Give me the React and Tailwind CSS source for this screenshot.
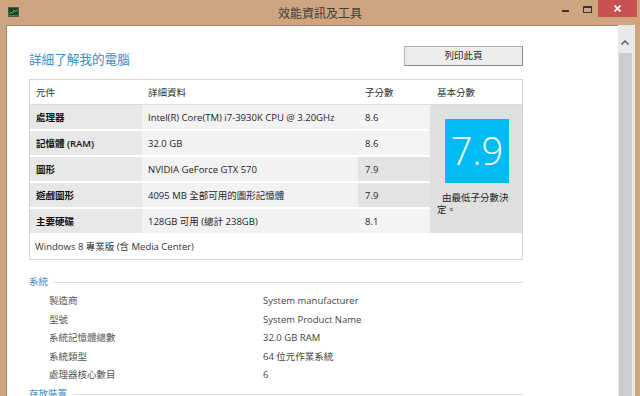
const rows = [
  { part: '處理器', detail: 'Intel(R) Core(TM) i7-3930K CPU @ 3.20GHz', score: '8.6', low: false },
  { part: '記憶體 (RAM)', detail: '32.0 GB', score: '8.6', low: false },
  { part: '圖形', detail: 'NVIDIA GeForce GTX 570', score: '7.9', low: true },
  { part: '遊戲圖形', detail: '4095 MB 全部可用的圖形記憶體', score: '7.9', low: true },
  { part: '主要硬碟', detail: '128GB 可用 (總計 238GB)', score: '8.1', low: false },
]

const system = [
  ['製造商', 'System manufacturer'],
  ['型號', 'System Product Name'],
  ['系統記憶體總數', '32.0 GB RAM'],
  ['系統類型', '64 位元作業系統'],
  ['處理器核心數目', '6'],
]

function TitleBar() {
  return (
    <div className="grid grid-cols-[1fr_auto_1fr] h-[25px] items-start">
      <div className="pl-[8px] pt-[7px]">
        <svg width="11" height="10" viewBox="0 0 11 10">
          <rect x="0.5" y="0.5" width="10" height="9" fill="#1f3d22" stroke="#4d5a4f" />
          <polyline points="1.5,7 3,5 4.5,6.5 6,3 7.5,5 9.5,2.5" fill="none" stroke="#3fc24a" strokeWidth="1" />
          <rect x="1" y="8" width="9" height="1" fill="#2f8f37" />
        </svg>
      </div>
      <div className="pt-[6px] text-[12px] leading-[15px] text-[#3c3c3c]">效能資訊及工具</div>
      <div className="flex justify-end pr-[3px]">
        <div className="w-[22px] h-[17px] flex justify-center pt-[10px]">
          <div className="w-[7px] h-[2px] bg-[#333]"></div>
        </div>
        <div className="w-[22px] h-[17px] flex justify-center pt-[6px]">
          <div className="w-[9px] h-[7px] border border-t-2 border-[#333]"></div>
        </div>
        <div className="w-[39px] h-[17px] bg-[#c75050] flex items-center justify-center">
          <svg width="7" height="7" viewBox="0 0 7 7">
            <path d="M0.5 0.5L6.5 6.5M6.5 0.5L0.5 6.5" stroke="#fff" strokeWidth="1.6" />
          </svg>
        </div>
      </div>
    </div>
  )
}

function ScoreTable() {
  return (
    <div className="mt-[11px] w-[494px] border border-[#d6d6d6] text-[9.5px] text-[#1e1e1e]">
      <div className="flex h-[25px] items-center pt-[2px] border-b border-[#dadada] text-[#333]">
        <div className="w-[112px] pl-[6px]">元件</div>
        <div className="w-[216px] pl-[6px]">詳細資料</div>
        <div className="w-[72px] pl-[7px]">子分數</div>
        <div className="w-[92px] pl-[7px]">基本分數</div>
      </div>
      <div className="flex">
        <div className="w-[400px] flex flex-col gap-[2px]">
          {rows.map((r) => (
            <div key={r.part} className="flex h-[24px] items-center">
              <div className="w-[112px] h-full flex items-center pt-[2px] pl-[6px] bg-[#e7e7e7] font-semibold text-[#111]">{r.part}</div>
              <div className="w-[216px] h-full flex items-center pt-[2px] pl-[6px] bg-[#f2f2f2]">{r.detail}</div>
              <div className={`w-[72px] h-full flex items-center pt-[2px] pl-[7px] ${r.low ? 'bg-[#e3e3e3]' : 'bg-[#f4f4f4]'}`}>{r.score}</div>
            </div>
          ))}
        </div>
        <div className="w-[92px] bg-[#dfdfdf] px-[7px] pt-[14px]">
          <div className="ml-[8px] w-[64px] h-[64px] bg-[#00bcf2] flex items-center justify-center pb-[3px] text-white text-[38px] font-light leading-none">7.9</div>
          <p className="mt-[9px] leading-[12px] text-[#222]">
            <span className="pl-[5px]">由最低子分數決</span>
            <br />
            定。
          </p>
        </div>
      </div>
      <div className="h-[26px] flex items-center pt-[3px] pl-[5px] text-[#333]">Windows 8 專業版 (含 Media Center)</div>
    </div>
  )
}

function SectionHeader({ title }) {
  return (
    <div className="flex items-center w-[494px] h-[14px] mt-[3px]">
      <span className="text-[9.5px] text-[#3d8bc9]">{title}</span>
      <div className="flex-1 h-px bg-[#dcdcdc] ml-[6px]"></div>
    </div>
  )
}

export default function App() {
  return (
    <div className="w-[640px] h-[396px] bg-[#cea57f] overflow-hidden font-['Open_Sans','Noto_Sans_CJK_TC',sans-serif]">
      <TitleBar />
      <div className="flex h-[371px]">
        <div className="w-[6px]"></div>
        <div className="flex-1 bg-white border-l border-t border-[#9c8a78] overflow-hidden pl-[22px] pt-[20px]">
          <div className="flex justify-between items-start w-[494px]">
            <h1 className="mt-[6px] text-[12.6px] leading-[16px] text-[#3d8bc9]">詳細了解我的電腦</h1>
            <button className="w-[119px] h-[20px] pt-[1px] bg-[#ececec] border border-[#b5b5b5] border-r-[#8a8a8a] border-b-[#8a8a8a] text-[9.5px] text-[#222]">列印此頁</button>
          </div>
          <ScoreTable />
          <div className="mt-[15px]">
            <SectionHeader title="系統" />
            <div className="mt-[3px] text-[9.5px] leading-[18.5px]">
              {system.map(([k, v]) => (
                <div key={k} className="flex">
                  <div className="w-[234px] pl-[20px] text-[#555]">{k}</div>
                  <div className="text-[#444]">{v}</div>
                </div>
              ))}
            </div>
            <SectionHeader title="存放裝置" />
          </div>
        </div>
        <div className="w-[17px] bg-[#e8e8e8] border-t border-[#e8e8e8] flex flex-col">
          <div className="h-[27px] flex justify-center pt-[14px] pr-[3px]">
            <svg width="8" height="5" viewBox="0 0 8 5">
              <polyline points="0.5,4.5 4,1 7.5,4.5" fill="none" stroke="#606060" strokeWidth="1.5" />
            </svg>
          </div>
          <div className="flex-1 ml-[1px] mr-[3px] bg-[#cdcdcd]"></div>
        </div>
        <div className="w-[5px]"></div>
      </div>
    </div>
  )
}
